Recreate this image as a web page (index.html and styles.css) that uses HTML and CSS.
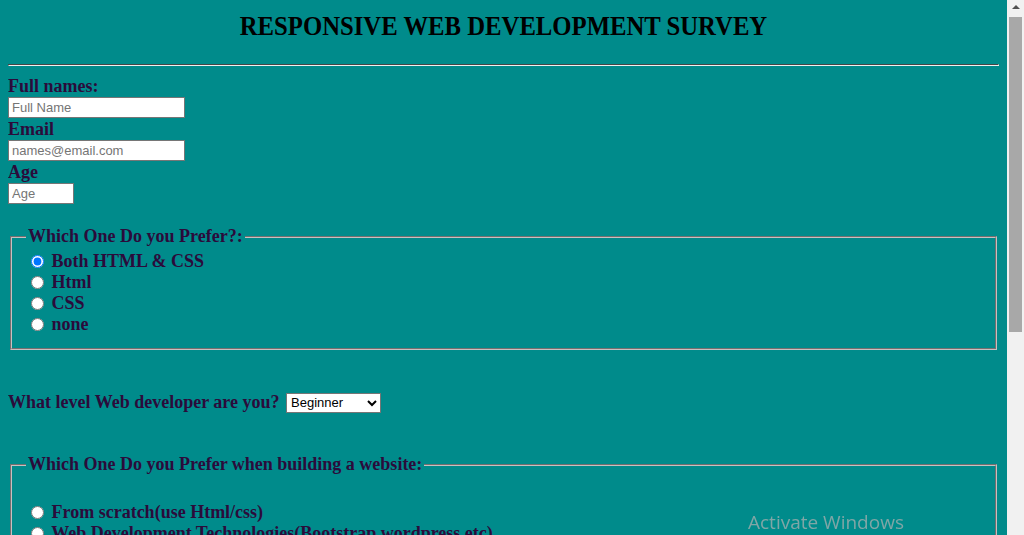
FILE: index.html
```html
<!DOCTYPE html>
<html lang="en">
<head>
<meta charset="utf-8">
<title>Survey</title>
<link rel="stylesheet" href="styles.css">
</head>
<body>
<h1 class="title">RESPONSIVE WEB DEVELOPMENT SURVEY</h1>
<hr class="rule">
<form class="survey">
  <label class="field-label" for="name">Full names:</label>
  <input class="text-input" id="name" type="text" placeholder="Full Name">
  <label class="field-label" for="email">Email</label>
  <input class="text-input" id="email" type="email" placeholder="names@email.com">
  <label class="field-label" for="age">Age</label>
  <input class="text-input age" id="age" type="number" placeholder="Age">

  <fieldset class="group first">
    <legend class="legend">Which One Do you Prefer?:</legend>
    <div class="option"><input class="radio" type="radio" name="pref" checked> Both HTML &amp; CSS</div>
    <div class="option"><input class="radio" type="radio" name="pref"> Html</div>
    <div class="option"><input class="radio" type="radio" name="pref"> CSS</div>
    <div class="option"><input class="radio" type="radio" name="pref"> none</div>
  </fieldset>

  <div class="level">What level Web developer are you? <select class="select"><option>Beginner</option><option>Intermediate</option><option>Expert</option></select></div>

  <fieldset class="group second">
    <legend class="legend">Which One Do you Prefer when building a website:</legend>
    <div class="option"><input class="radio" type="radio" name="build"> From scratch(use Html/css)</div>
    <div class="option"><input class="radio" type="radio" name="build"> Web Development Technologies(Bootstrap,wordpress,etc)</div>
    <div class="option"><input class="radio" type="radio" name="build"> Both</div>
  </fieldset>

  <div class="comments">
    <label class="field-label" for="comments">Any comments or suggestions?</label>
    <textarea class="textarea" id="comments" placeholder="Enter your comment here..."></textarea>
  </div>
  <button class="submit" type="submit">Submit</button>
</form>
<div class="watermark">Activate Windows</div>
<div class="scrollbar" aria-hidden="true">
  <div class="scroll-arrow"></div>
  <div class="scroll-thumb"></div>
</div>
</body>
</html>
```
FILE: styles.css
```css
html {
  background: #008b8b;
}
body {
  margin: 8px 25px 8px 8px;
  background: #008b8b;
  font-family: "Liberation Serif", "Times New Roman", serif;
  color: #2b0b3b;
}
.title {
  margin: 0;
  padding: 8px 0 20px;
  line-height: 20px;
  text-align: center;
  font-family: "Liberation Serif", "Times New Roman", serif;
  font-size: 27px;
  font-weight: bold;
  color: #000;
  transform: scaleX(0.915);
}
.rule {
  margin: 8px 0 10px;
  height: 0;
  border: 1px inset #eee;
  border-top-color: #9a9a9a;
  border-left-color: #9a9a9a;
  border-bottom-color: #f0f0f0;
  border-right-color: #f0f0f0;
}
.survey {
  display: block;
}
.field-label {
  display: block;
  font-size: 18px;
  font-weight: bold;
  line-height: 21px;
}
.text-input {
  display: block;
  box-sizing: border-box;
  width: 177px;
  height: 21px;
  margin: 0 0 1px;
  padding: 1px 3px;
  border: 1px solid #767676;
  background: #fff;
  font-family: "Liberation Sans", Arial, sans-serif;
  font-size: 13px;
  color: #000;
}
.text-input::placeholder {
  color: #757575;
}
.text-input.age {
  width: 66px;
  -moz-appearance: textfield;
}
.text-input.age::-webkit-inner-spin-button,
.text-input.age::-webkit-outer-spin-button {
  -webkit-appearance: none;
  margin: 0;
}
.group {
  margin: 22px 2px 0;
  padding: 4px 14px 13px;
  border: 2px groove #c8c0c0;
  font-size: 18px;
  font-weight: bold;
}
.legend {
  padding: 0 2px;
  line-height: 21px;
}
.option {
  line-height: 21px;
}
.radio {
  width: 13px;
  height: 13px;
  margin: 3px 3px 0 5px;
  vertical-align: -1px;
  accent-color: #0075ff;
}
.level {
  margin-top: 42px;
  font-size: 18px;
  font-weight: bold;
  line-height: 21px;
}
.select {
  box-sizing: border-box;
  width: 95px;
  height: 20px;
  margin-left: 2px;
  vertical-align: 1px;
  font-family: "Liberation Sans", Arial, sans-serif;
  font-size: 13px;
  border: 1px solid #767676;
  background: #fff;
  color: #000;
}
.group.second {
  margin-top: 41px;
  padding-top: 27px;
}
.comments {
  margin-top: 30px;
}
.textarea {
  display: block;
  width: 400px;
  height: 100px;
  font-family: "Liberation Sans", Arial, sans-serif;
}
.submit {
  margin-top: 20px;
  font-family: "Liberation Sans", Arial, sans-serif;
  font-size: 13px;
}
.watermark {
  position: fixed;
  left: 748px;
  top: 509px;
  font-family: "Open Sans", "Noto Sans", sans-serif;
  font-size: 19px;
  color: #7fa6a6;
  pointer-events: none;
}
.scrollbar {
  position: fixed;
  top: 0;
  right: 0;
  width: 17px;
  height: 535px;
  background: #f1f1f1;
}
.scroll-arrow {
  margin: 5px auto 0;
  width: 0;
  height: 0;
  border-left: 4px solid transparent;
  border-right: 4px solid transparent;
  border-bottom: 4px solid #505050;
}
.scroll-thumb {
  margin: 8px 2px 0;
  height: 315px;
  background: #a8a8a8;
}
```
